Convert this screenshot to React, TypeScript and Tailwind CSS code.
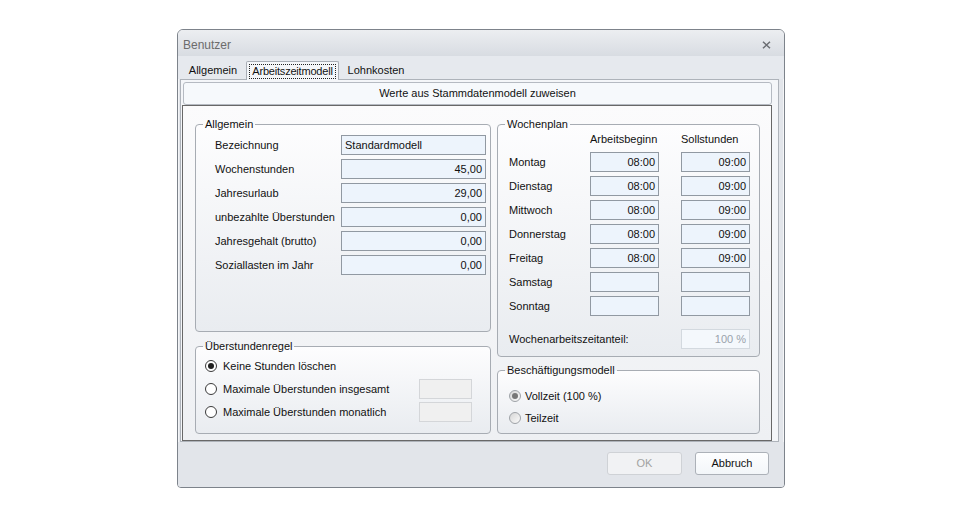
import { clsx } from 'clsx'

const ALLGEMEIN = [
  { label: 'Bezeichnung', value: 'Standardmodell', left: true },
  { label: 'Wochenstunden', value: '45,00' },
  { label: 'Jahresurlaub', value: '29,00' },
  { label: 'unbezahlte Überstunden', value: '0,00' },
  { label: 'Jahresgehalt (brutto)', value: '0,00' },
  { label: 'Soziallasten im Jahr', value: '0,00' },
]

const DAYS = [
  { day: 'Montag', start: '08:00', hours: '09:00' },
  { day: 'Dienstag', start: '08:00', hours: '09:00' },
  { day: 'Mittwoch', start: '08:00', hours: '09:00' },
  { day: 'Donnerstag', start: '08:00', hours: '09:00' },
  { day: 'Freitag', start: '08:00', hours: '09:00' },
  { day: 'Samstag', start: '', hours: '' },
  { day: 'Sonntag', start: '', hours: '' },
]

function Field({ value, left, className }: { value: string; left?: boolean; className?: string }) {
  return (
    <div
      className={clsx(
        'h-[20px] border border-[#9199a2] bg-[#edf4fc] flex items-center text-[11px] text-[#111] leading-none',
        left ? 'justify-start pl-[3px]' : 'justify-end pr-[3px]',
        className,
      )}>
      {value}
    </div>
  )
}

// fieldset keeps the native gap in the border behind the legend
function Group({ title, className, inner, children }: {
  title: string; className?: string; inner?: string; children: React.ReactNode
}) {
  return (
    <fieldset
      className={clsx(
        'border border-[#a7acb3] rounded-[4px] bg-gradient-to-b from-[#fdfdfe] to-[#e9ecf0] min-w-0 p-0',
        className,
      )}>
      <legend className="ml-[7px] px-[2px] text-[11px] leading-[13px] text-[#111]">{title}</legend>
      <div className={inner}>{children}</div>
    </fieldset>
  )
}

function Radio({ checked, soft }: { checked?: boolean; soft?: boolean }) {
  return (
    <span
      className={clsx(
        'w-[12px] h-[12px] rounded-full flex items-center justify-center shrink-0',
        soft
          ? 'border border-[#9ea2a7] bg-gradient-to-br from-[#d6d6d6] to-[#fbfbfb]'
          : 'border border-[#3a3a3a] bg-white',
      )}>
      {checked && (
        <span className={clsx('w-[6px] h-[6px] rounded-full', soft ? 'bg-[#777]' : 'bg-[#1f1f1f]')} />
      )}
    </span>
  )
}

export default function App() {
  return (
    <div className="min-h-screen bg-white pt-[29px] pl-[177px] font-['Liberation_Sans',Arial,sans-serif] text-[#111]">
      <div className="w-[608px] h-[459px] flex flex-col border border-[#7d838b] rounded-t-[6px] rounded-b-[4px] bg-[#e2e5ea] shadow-[inset_0_0_0_1px_#f4f5f7] overflow-hidden">
        {/* Title */}
        <div className="h-[26px] shrink-0 flex items-center justify-between pl-[5px] pr-[13px] bg-gradient-to-b from-[#eceef1] to-[#d8dce2]">
          <span className="text-[12px] text-[#6c6c6c] pt-[3px]">Benutzer</span>
          <svg width="9" height="8" viewBox="0 0 9 8" className="mt-[3px]">
            <path d="M1 0.8 L8 7.2 M8 0.8 L1 7.2" stroke="#6a6d72" strokeWidth="1.5" fill="none" />
          </svg>
        </div>

        {/* Tabs */}
        <div className="h-[23px] shrink-0 flex items-end pl-[2px] bg-[#e6e9ee] text-[11px]">
          <div className="w-[66px] h-[18px] flex items-center justify-center">Allgemein</div>
          <div className="relative z-10 w-[93px] h-[19px] -mb-[1px] border border-b-0 border-[#a9aeb6] rounded-t-[2px] bg-[#f4f6f9] p-[2px] pb-[1px]">
            <div className="h-full border border-dotted border-[#222] flex items-center justify-center tracking-[-0.2px]">Arbeitszeitmodell</div>
          </div>
          <div className="w-[74px] h-[18px] flex items-center justify-center">Lohnkosten</div>
        </div>

        {/* Tab page */}
        <div className="h-[363px] shrink-0 ml-[2px] mr-[5px] border border-[#aeb3ba] bg-[#f4f6f9] pl-[1px] pr-[6px] pt-[2px] flex flex-col">
          <div className="h-[23px] shrink-0 ml-[1px] border border-[#b5bac2] rounded-[3px] bg-[#f6f9fc] flex items-center justify-center text-[11px]">
            Werte aus Stammdatenmodell zuweisen
          </div>
          <div className="flex-1 border border-[#686868] bg-gradient-to-b from-[#fbfbfc] to-[#eef0f3] pl-[12px] pr-[11px] pt-[12px] pb-[6px] flex gap-[6px]">
            {/* Left column */}
            <div className="w-[296px] flex flex-col gap-[8px]">
              <Group title="Allgemein" className="h-[214px]" inner="pl-[19px] pr-[4px] pt-[4px]">
                <div className="flex flex-col gap-[4px]">
                  {ALLGEMEIN.map((r) => (
                    <div key={r.label} className="grid grid-cols-[126px_145px] items-center">
                      <span className="text-[11px]">{r.label}</span>
                      <Field value={r.value} left={r.left} />
                    </div>
                  ))}
                </div>
              </Group>
              <Group title="Überstundenregel" className="flex-1" inner="pl-[9px] pr-[18px] pt-[3px]">
                <div className="flex flex-col gap-[3px] text-[11px]">
                  <div className="h-[20px] flex items-center gap-[6px]">
                    <Radio checked />
                    <span>Keine Stunden löschen</span>
                  </div>
                  <div className="h-[20px] flex items-center gap-[6px]">
                    <Radio />
                    <span className="flex-1">Maximale Überstunden insgesamt</span>
                    <div className="w-[53px] h-[20px] border border-[#d4d6d9] bg-[#f0f0f0]" />
                  </div>
                  <div className="h-[20px] flex items-center gap-[6px]">
                    <Radio />
                    <span className="flex-1">Maximale Überstunden monatlich</span>
                    <div className="w-[53px] h-[20px] border border-[#d4d6d9] bg-[#f0f0f0]" />
                  </div>
                </div>
              </Group>
            </div>

            {/* Right column */}
            <div className="w-[263px] flex flex-col gap-[7px]">
              <Group title="Wochenplan" className="h-[239px]" inner="pl-[11px] pr-[9px]">
                <div className="flex h-[14px] items-center text-[11px] mt-[1px]">
                  <span className="w-[81px]" />
                  <span className="w-[69px]">Arbeitsbeginn</span>
                  <span className="ml-[22px]">Sollstunden</span>
                </div>
                <div className="mt-[6px] flex flex-col gap-[4px]">
                  {DAYS.map((d) => (
                    <div key={d.day} className="flex items-center text-[11px]">
                      <span className="w-[81px]">{d.day}</span>
                      <Field value={d.start} className="w-[69px]" />
                      <Field value={d.hours} className="w-[69px] ml-[22px]" />
                    </div>
                  ))}
                </div>
                <div className="mt-[13px] flex items-center text-[11px]">
                  <span className="w-[172px]">Wochenarbeitszeitanteil:</span>
                  <div className="w-[69px] h-[20px] border border-[#d3d9df] bg-[#f4f8fc] flex items-center justify-end pr-[3px] text-[#9aa3ad]">100 %</div>
                </div>
              </Group>
              <Group title="Beschäftigungsmodell" className="flex-1" inner="pl-[11px] pt-[11px]">
                <div className="flex flex-col gap-[6px] text-[11px]">
                  <div className="h-[16px] flex items-center gap-[4px]">
                    <Radio checked soft />
                    <span>Vollzeit (100 %)</span>
                  </div>
                  <div className="h-[16px] flex items-center gap-[4px]">
                    <Radio soft />
                    <span>Teilzeit</span>
                  </div>
                </div>
              </Group>
            </div>
          </div>
        </div>

        {/* Footer */}
        <div className="flex-1 flex justify-end items-start gap-[13px] pt-[10px] pr-[15px] bg-[#e2e5ea] text-[11px]">
          <button className="w-[75px] h-[23px] border border-[#cfd2d6] rounded-[3px] bg-[#f1f2f4] text-[#a2a2a2]">OK</button>
          <button className="w-[74px] h-[23px] border border-[#acb1b8] rounded-[3px] bg-gradient-to-b from-[#fdfeff] to-[#f3f6f9] text-[#111]">Abbruch</button>
        </div>
      </div>
    </div>
  )
}
